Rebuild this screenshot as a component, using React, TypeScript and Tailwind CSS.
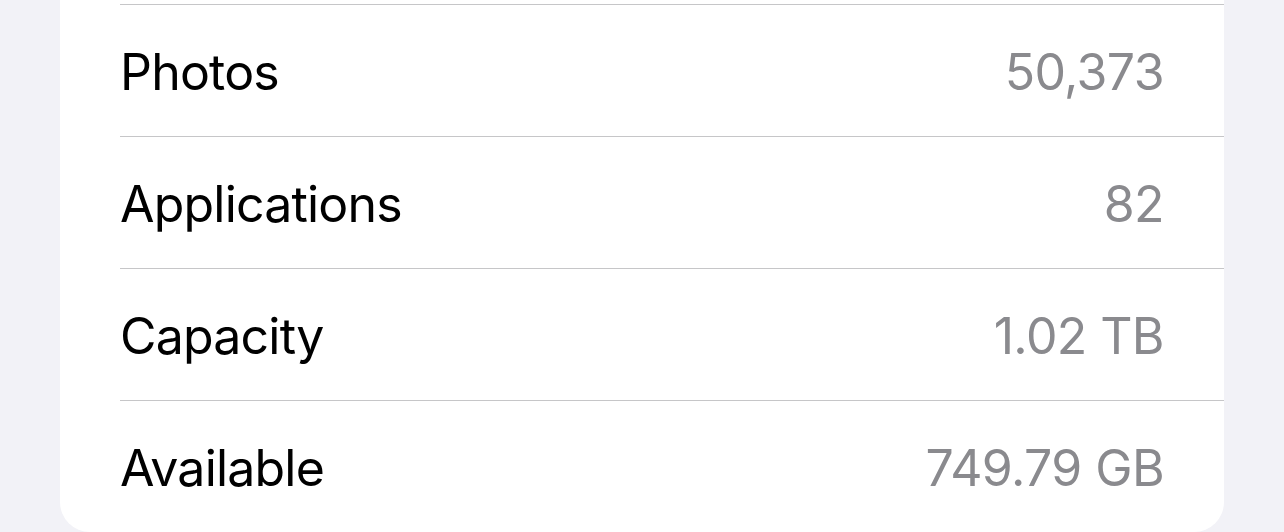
import React from 'react';

// Storage details rows, iOS grouped list style
const rows = [
  { label: 'Photos', value: '50,373' },
  { label: 'Applications', value: '82' },
  { label: 'Capacity', value: '1.02 TB' },
  { label: 'Available', value: '749.79 GB' },
];

const App: React.FC = () => {
  return (
    <div
      className="w-[1284px] h-[532px] bg-[#f2f2f7] px-[60px] overflow-hidden"
      style={{ fontFamily: 'Inter, "Noto Sans", sans-serif' }}
    >
      <div className="bg-white rounded-b-[30px] pt-[4px]">
        {rows.map((row) => (
          <div key={row.label} className="pl-[60px]">
            <div className="h-[132px] border-t border-[#c6c6c8] flex items-center justify-between pt-[4px] pr-[60px]">
              <span className="text-[50px] text-black tracking-[-0.8px]">{row.label}</span>
              <span className="text-[50px] text-[#8a8a8e] tracking-[-0.6px]">{row.value}</span>
            </div>
          </div>
        ))}
      </div>
    </div>
  );
};

export default App;
